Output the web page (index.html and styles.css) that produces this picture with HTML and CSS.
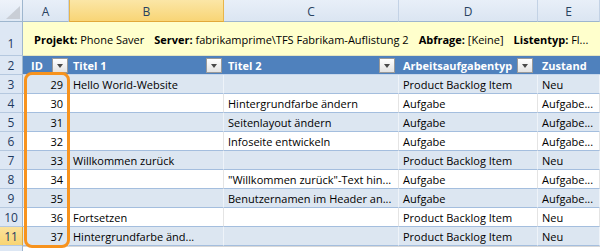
FILE: index.html
```html
<!DOCTYPE html>
<html lang="de">
<head>
<meta charset="utf-8">
<title>Phone Saver</title>
<link rel="stylesheet" href="styles.css">
</head>
<body>
<div class="sheet">
  <div class="corner"><span class="corner-tri"></span></div>
  <div class="colhead">A</div>
  <div class="colhead colhead--sel">B</div>
  <div class="colhead">C</div>
  <div class="colhead">D</div>
  <div class="colhead">E</div>

  <div class="rowhead rowhead--tall">1</div>
  <div class="info">
    <span class="info-item"><b>Projekt:</b> Phone Saver</span>
    <span class="info-item"><b>Server:</b> fabrikamprime\TFS Fabrikam-Auflistung 2</span>
    <span class="info-item"><b>Abfrage:</b> [Keine]</span>
    <span class="info-item"><b>Listentyp:</b> Fl...</span>
  </div>

  <div class="rowhead">2</div>
  <div class="th th--id">ID<span class="dd dd--a"></span></div>
  <div class="th">Titel 1<span class="dd dd--b"></span></div>
  <div class="th">Titel 2<span class="dd dd--c"></span></div>
  <div class="th">Arbeitsaufgabentyp<span class="dd dd--d"></span></div>
  <div class="th">Zustand</div>

  <div class="rowhead">3</div>
  <div class="td td--band td--num">29</div>
  <div class="td td--band">Hello World-Website</div>
  <div class="td td--band"></div>
  <div class="td td--band">Product Backlog Item</div>
  <div class="td td--band">Neu</div>

  <div class="rowhead">4</div>
  <div class="td td--num">30</div>
  <div class="td"></div>
  <div class="td">Hintergrundfarbe ändern</div>
  <div class="td">Aufgabe</div>
  <div class="td">Aufgabe...</div>

  <div class="rowhead">5</div>
  <div class="td td--band td--num">31</div>
  <div class="td td--band"></div>
  <div class="td td--band">Seitenlayout ändern</div>
  <div class="td td--band">Aufgabe</div>
  <div class="td td--band">Aufgabe...</div>

  <div class="rowhead">6</div>
  <div class="td td--num">32</div>
  <div class="td"></div>
  <div class="td">Infoseite entwickeln</div>
  <div class="td">Aufgabe</div>
  <div class="td">Aufgabe...</div>

  <div class="rowhead">7</div>
  <div class="td td--band td--num">33</div>
  <div class="td td--band">Willkommen zurück</div>
  <div class="td td--band"></div>
  <div class="td td--band">Product Backlog Item</div>
  <div class="td td--band">Neu</div>

  <div class="rowhead">8</div>
  <div class="td td--num">34</div>
  <div class="td"></div>
  <div class="td">"Willkommen zurück"-Text hin...</div>
  <div class="td">Aufgabe</div>
  <div class="td">Aufgabe...</div>

  <div class="rowhead">9</div>
  <div class="td td--band td--num">35</div>
  <div class="td td--band"></div>
  <div class="td td--band">Benutzernamen im Header an...</div>
  <div class="td td--band">Aufgabe</div>
  <div class="td td--band">Aufgabe...</div>

  <div class="rowhead">10</div>
  <div class="td td--num">36</div>
  <div class="td">Fortsetzen</div>
  <div class="td"></div>
  <div class="td">Product Backlog Item</div>
  <div class="td">Neu</div>

  <div class="rowhead rowhead--sel">11</div>
  <div class="td td--band td--num">37</div>
  <div class="td td--band">Hintergrundfarbe änd...</div>
  <div class="td td--band"></div>
  <div class="td td--band">Product Backlog Item</div>
  <div class="td td--band">Neu</div>

  <div class="rowhead rowhead--tail"></div>
  <div class="tail"></div>
  <div class="tail"></div>
  <div class="tail"></div>
  <div class="tail"></div>
  <div class="tail"></div>

  <div class="highlight"></div>
</div>
</body>
</html>
```

FILE: styles.css
```css
* { box-sizing: border-box; }

html, body {
  margin: 0;
  padding: 0;
  background: #ffffff;
  overflow: hidden;
}

body {
  font-family: "Open Sans", "Noto Sans", "DejaVu Sans", sans-serif;
  font-size: 11px;
  color: #000;
}

.sheet {
  position: relative;
  display: grid;
  grid-template-columns: 23px 46px 155px 175px 139px 62px;
  grid-template-rows: 22px 34px 19px repeat(9, 19px) 5px;
  width: 600px;
  height: 251px;
}

/* column headers */
.corner {
  position: relative;
  background: linear-gradient(#eef3fa, #dfe8f4);
  border-right: 1px solid #9eb6ce;
  border-bottom: 1px solid #9eb6ce;
}
.corner-tri {
  position: absolute;
  right: 2px;
  bottom: 2px;
  width: 0;
  height: 0;
  border-left: 14px solid transparent;
  border-bottom: 13px solid #c9ced6;
}

.colhead {
  display: flex;
  align-items: center;
  justify-content: center;
  background: linear-gradient(#e8eff8, #dbe5f2);
  border-right: 1px solid #c3d2e5;
  border-bottom: 1px solid #9eb6ce;
  color: #27415f;
  font-size: 12px;
  padding-top: 2px;
}
.colhead--sel {
  background: linear-gradient(#fbe6a6, #f8d576);
  border-left: 1px solid #e8b54a;
  border-right: 1px solid #e8b54a;
  border-bottom: 1px solid #e2a93a;
}

/* row headers */
.rowhead {
  display: flex;
  align-items: center;
  justify-content: center;
  background: #dde7f4;
  border-right: 1px solid #9eb6ce;
  border-bottom: 1px solid #b5c8df;
  color: #1f3a60;
  font-size: 12px;
}
.rowhead--tall {
  align-items: flex-end;
  padding-bottom: 3px;
}
.rowhead--sel {
  background: linear-gradient(#fbe29b, #f8d473);
  border-right: 1px solid #e2a93a;
}
.rowhead--tail {
  border-bottom: none;
}

/* info row */
.info {
  grid-column: span 5;
  display: flex;
  align-items: center;
  white-space: nowrap;
  overflow: hidden;
  background: #ffffcc;
  border-bottom: 1px solid #e6e6c0;
  padding-left: 11px;
  padding-top: 2px;
  color: #000;
}
.info-item {
  margin-right: 10px;
}
.info-item b {
  font-weight: 700;
}

/* table header */
.th {
  display: flex;
  align-items: center;
  background: #4f81bd;
  color: #ffffff;
  font-weight: 700;
  padding-left: 4px;
  border-bottom: 1px solid #c6d7ec;
  white-space: nowrap;
  overflow: hidden;
}
.th--id {
  padding-left: 8px;
}
.dd {
  position: relative;
  margin-left: auto;
  width: 16px;
  height: 15px;
  background: linear-gradient(#ffffff, #e3e3e3);
  border: 1px solid #9a9a9a;
  flex: none;
}
.dd::after {
  content: "";
  position: absolute;
  left: 4px;
  top: 5px;
  border-left: 3.5px solid transparent;
  border-right: 3.5px solid transparent;
  border-top: 4px solid #4a4a4a;
}
.dd--a { margin-right: 1px; }
.dd--b { margin-right: 2px; }
.dd--c { margin-right: 4px; }
.dd--d { margin-right: 5px; }

/* data cells */
.td {
  display: flex;
  align-items: center;
  padding-left: 4px;
  background: #ffffff;
  border-bottom: 1px solid #a4bede;
  border-right: 1px solid #e4e4e4;
  white-space: nowrap;
  overflow: hidden;
}
.td--band {
  background: #dce6f1;
  border-right-color: #eef3f9;
}
.td--num {
  justify-content: flex-end;
  padding-right: 5px;
}

.tail {
  background: #ffffff;
  border-top: 1px solid #d8d8d8;
}

/* orange call-out around the ID column */
.highlight {
  position: absolute;
  left: 24px;
  top: 72px;
  width: 46px;
  height: 176px;
  border: 3px solid #f7931e;
  border-radius: 8px;
  pointer-events: none;
}
```
